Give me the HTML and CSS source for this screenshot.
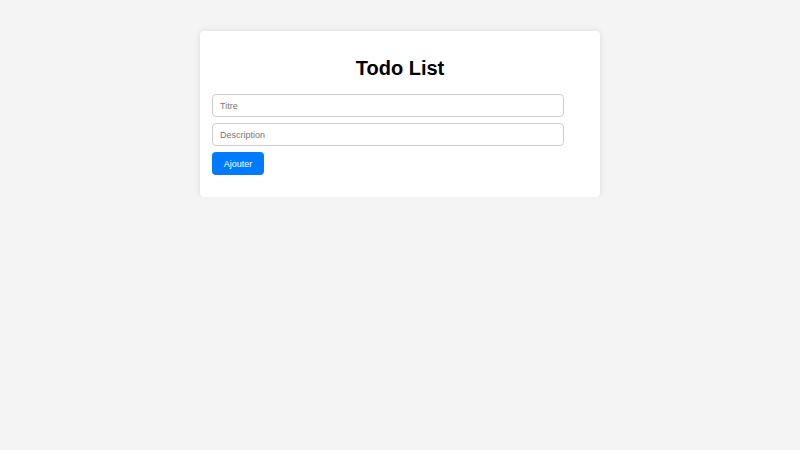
FILE: index.html
```html
<!DOCTYPE html>
<html lang="fr">
<head>
<meta charset="utf-8">
<title>Todo List</title>
<link rel="stylesheet" href="styles.css">
</head>
<body>
<div class="card">
  <h1 class="title">Todo List</h1>
  <form class="form">
    <input class="field" type="text" placeholder="Titre">
    <input class="field" type="text" placeholder="Description">
    <button class="btn" type="button">Ajouter</button>
  </form>
</div>
</body>
</html>
```
FILE: styles.css
```css
* { box-sizing: border-box; }
body {
  margin: 0;
  background: #f4f4f4;
  font-family: "Liberation Sans", Arial, sans-serif;
}
.card {
  width: 400px;
  margin: 31px auto 0;
  padding: 12px 12px 22px;
  background: #fff;
  border-radius: 4px;
  box-shadow: 0 0 6px rgba(0, 0, 0, 0.1);
}
.title {
  margin: 14px 0 14px;
  font-size: 20px;
  line-height: 23px;
  text-align: center;
  color: #000;
}
.form {
  display: flex;
  flex-direction: column;
  align-items: flex-start;
  gap: 6px;
}
.field {
  width: 352px;
  height: 23px;
  padding: 0 7px;
  border: 1px solid #ccc;
  border-radius: 4px;
  font-family: inherit;
  font-size: 9px;
  color: #333;
  outline: none;
}
.field::placeholder { color: #777; }
.btn {
  width: 52px;
  height: 23px;
  padding: 0;
  border: none;
  border-radius: 4px;
  background: #007bff;
  color: #fff;
  font-family: inherit;
  font-size: 9px;
}
```
